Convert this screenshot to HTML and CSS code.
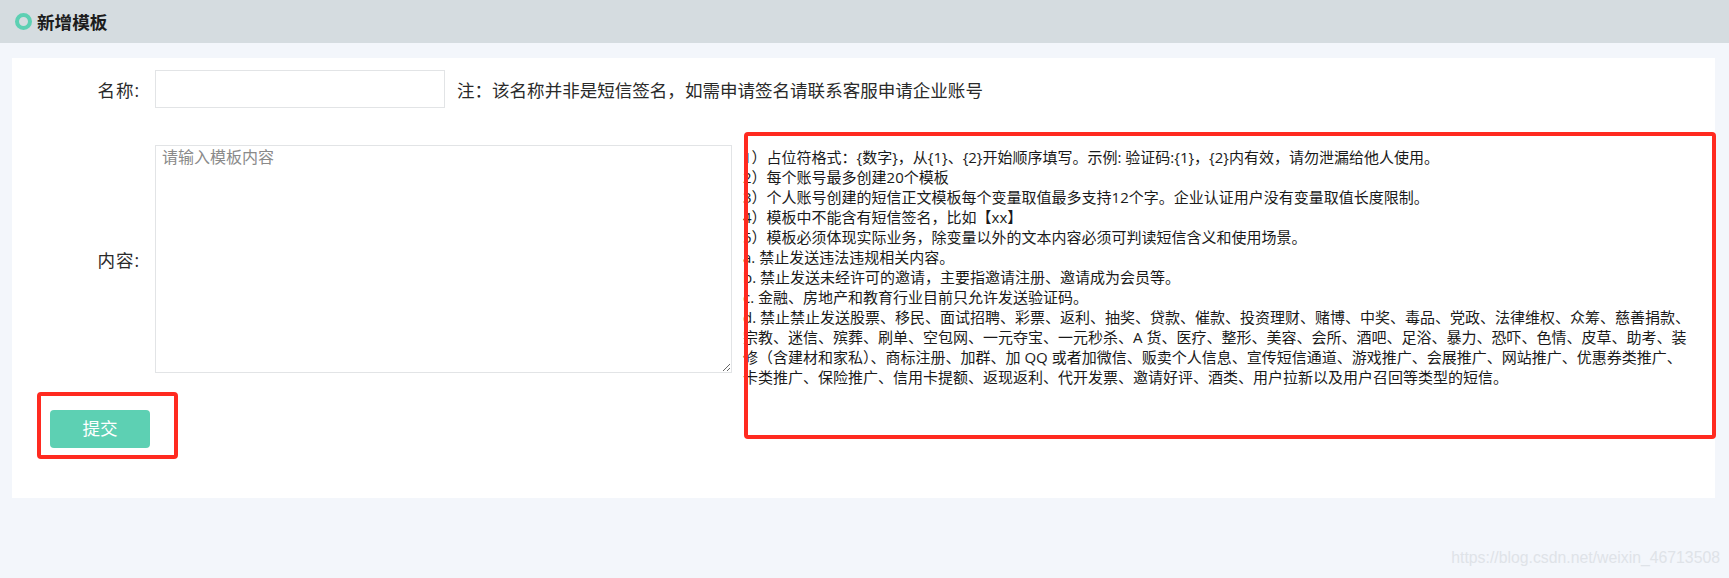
FILE: index.html
```html
<!DOCTYPE html>
<html lang="zh-CN">
<head>
    <meta charset="UTF-8">
    <title>新增模板</title>
    <link rel="stylesheet" href="styles.css">
</head>
<body>
    <header class="pageHead">
        <span class="headDot"></span>
        <h1>新增模板</h1>
    </header>
    <main class="panel">
        <div class="formRow">
            <label class="rowLabel">名称:</label>
            <input type="text" class="nameInput">
            <span class="nameNote">注：该名称并非是短信签名，如需申请签名请联系客服申请企业账号</span>
        </div>
        <div class="formRow contentRow">
            <label class="rowLabel">内容:</label>
            <textarea class="contentInput" placeholder="请输入模板内容"></textarea>
            <div class="rules">
                <div>1）占位符格式：{数字}，从{1}、{2}开始顺序填写。示例: 验证码:{1}，{2}内有效，请勿泄漏给他人使用。</div>
                <div>2）每个账号最多创建20个模板</div>
                <div>3）个人账号创建的短信正文模板每个变量取值最多支持12个字。企业认证用户没有变量取值长度限制。</div>
                <div>4）模板中不能含有短信签名，比如【xx】</div>
                <div>5）模板必须体现实际业务，除变量以外的文本内容必须可判读短信含义和使用场景。</div>
                <div>a. 禁止发送违法违规相关内容。</div>
                <div>b. 禁止发送未经许可的邀请，主要指邀请注册、邀请成为会员等。</div>
                <div>c. 金融、房地产和教育行业目前只允许发送验证码。</div>
                <div>d. 禁止禁止发送股票、移民、面试招聘、彩票、返利、抽奖、贷款、催款、投资理财、赌博、中奖、毒品、党政、法律维权、众筹、慈善捐款、宗教、迷信、殡葬、刷单、空包网、一元夺宝、一元秒杀、A 货、医疗、整形、美容、会所、酒吧、足浴、暴力、恐吓、色情、皮草、助考、装修（含建材和家私）、商标注册、加群、加 QQ 或者加微信、贩卖个人信息、宣传短信通道、游戏推广、会展推广、网站推广、优惠券类推广、卡类推广、保险推广、信用卡提额、返现返利、代开发票、邀请好评、酒类、用户拉新以及用户召回等类型的短信。</div>
            </div>
        </div>
        <button class="submitBtn">提交</button>
        <div class="mark markRules"></div>
        <div class="mark markSubmit"></div>
    </main>
    <div class="watermark">https://blog.csdn.net/weixin_46713508</div>
</body>
</html>
```

FILE: styles.css
```css
html, body {
    margin: 0;
    height: 578px;
    overflow: hidden;
}
body {
    position: relative;
    background: #f3f6fb;
    color: #2a2a2a;
    font-family: "Open Sans", "Noto Sans CJK SC", sans-serif;
    font-size: 17.5px;
}
.pageHead {
    display: flex;
    align-items: center;
    height: 43px;
    padding-left: 15px;
    background: #d5dce0;
}
.pageHead h1 {
    margin: 0 0 0 5px;
    font-size: 17.6px;
    font-weight: bold;
    color: #1c1c1c;
}
.headDot {
    box-sizing: border-box;
    width: 17px;
    height: 17px;
    border: 4px solid #5dd0b3;
    border-radius: 50%;
}
.panel {
    position: relative;
    box-sizing: border-box;
    height: 440px;
    margin: 15px 14px 0 12px;
    padding-top: 12px;
    background: #fff;
}
.formRow {
    display: flex;
    align-items: center;
}
.contentRow {
    height: 228px;
    margin-top: 37px;
}
.rowLabel {
    width: 128px;
    margin-right: 15px;
    text-align: right;
    letter-spacing: 1px;
}
.nameInput {
    box-sizing: border-box;
    width: 290px;
    height: 38px;
    border: 1px solid #e2e4e6;
    outline: none;
}
.nameNote {
    margin-left: 12px;
    font-size: 17.55px;
}
.contentInput {
    box-sizing: border-box;
    width: 577px;
    height: 228px;
    padding: 0 6px;
    border: 1px solid #e2e4e6;
    outline: none;
    font-family: inherit;
    font-size: 16px;
    line-height: 23px;
}
.contentInput::placeholder {
    color: #8a8a8a;
}
.rules {
    align-self: flex-start;
    width: 950px;
    margin: 2px 0 0 11px;
    font-size: 15px;
    line-height: 20px;
    color: #1a1a1a;
}
.submitBtn {
    display: block;
    width: 100px;
    height: 38px;
    margin: 37px 0 0 38px;
    padding: 0 0 3px;
    border: none;
    border-radius: 4px;
    background: #5dd0b3;
    color: #fff;
    font-family: inherit;
    font-size: 17.6px;
}
.mark {
    position: absolute;
    box-sizing: border-box;
    border: 4px solid #ff2a20;
    border-radius: 4px;
}
.markRules {
    left: 732px;
    top: 74px;
    width: 972px;
    height: 307px;
}
.markSubmit {
    left: 25px;
    top: 334px;
    width: 141px;
    height: 67px;
}
.watermark {
    position: absolute;
    right: 9px;
    bottom: 11px;
    font-family: "Liberation Sans", sans-serif;
    font-size: 15.8px;
    color: #dfe3e8;
}
```
